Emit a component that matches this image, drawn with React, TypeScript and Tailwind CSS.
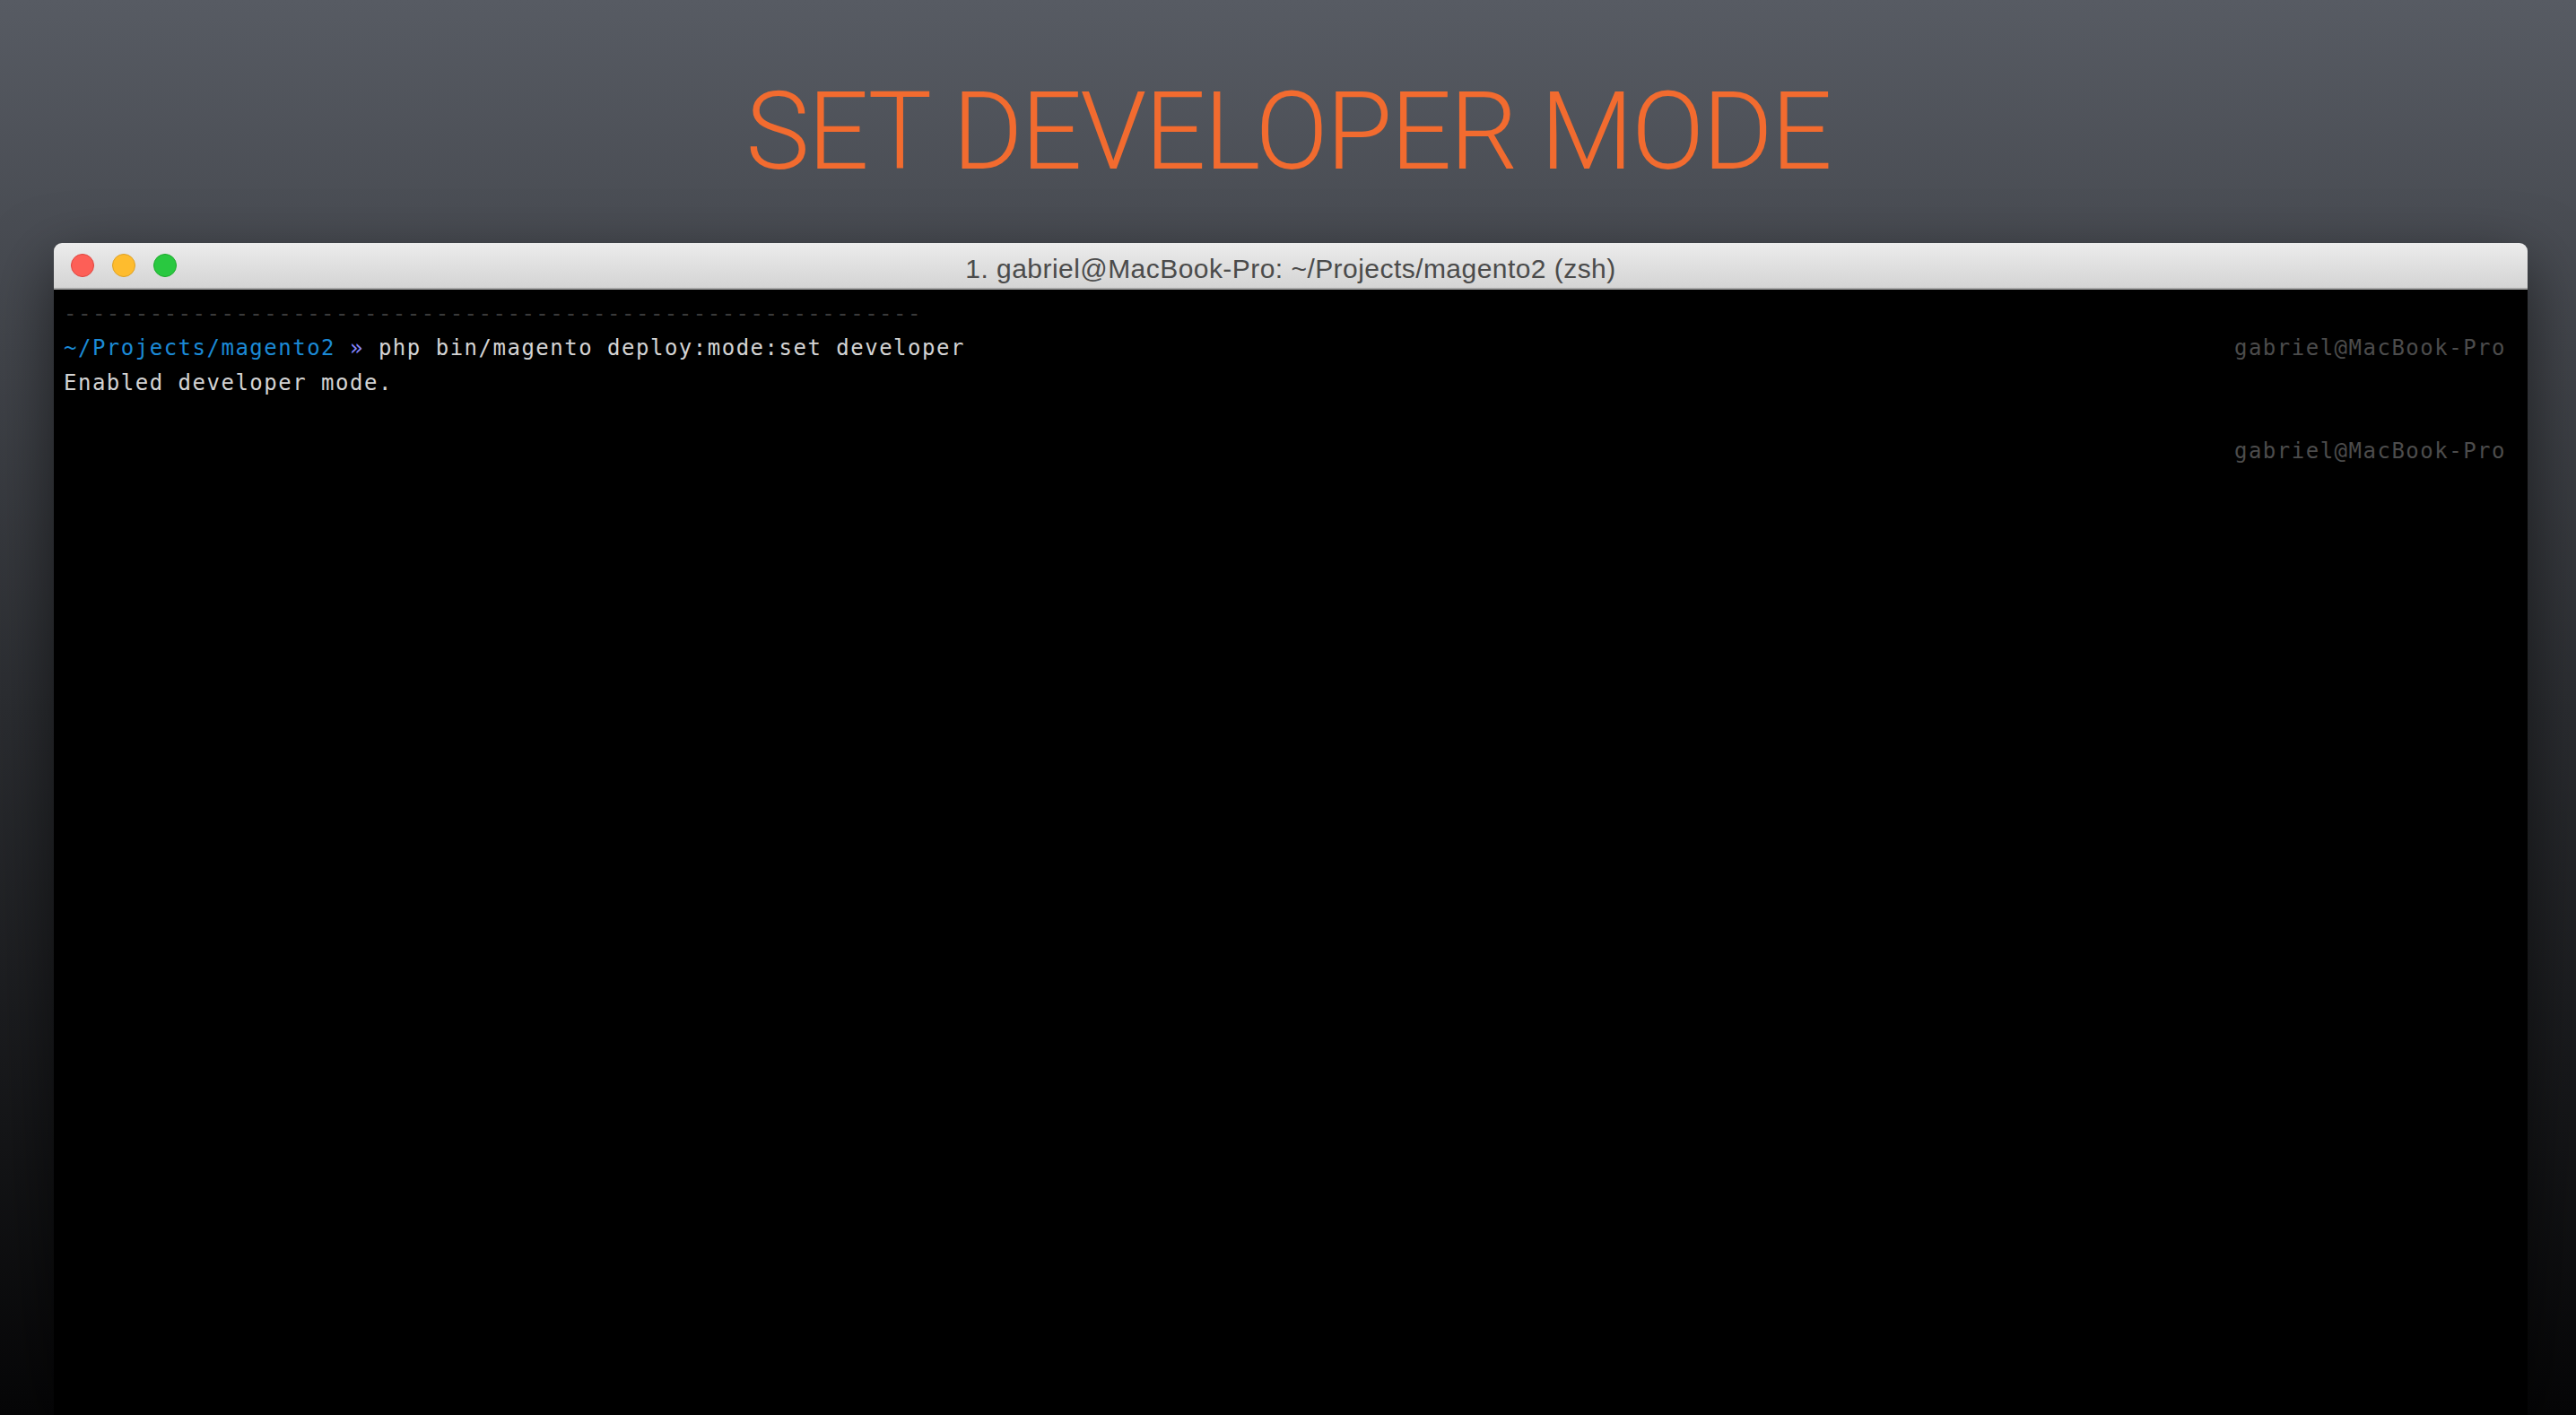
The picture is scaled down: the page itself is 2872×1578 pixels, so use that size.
const mono = { fontFamily: '"DejaVu Sans Mono", "Liberation Mono", monospace' };

function TrafficLights() {
  return (
    <div className="flex items-center gap-[20px] pl-[19px]">
      <span className="h-[26px] w-[26px] rounded-full border border-[#e0443e] bg-[#fd5f57]" />
      <span className="h-[26px] w-[26px] rounded-full border border-[#dea123] bg-[#febc2e]" />
      <span className="h-[26px] w-[26px] rounded-full border border-[#1aab29] bg-[#29c840]" />
    </div>
  );
}

function RightPrompt() {
  return <span className="text-[#4c4c4c]">gabriel@MacBook-Pro</span>;
}

export default function App() {
  return (
    <div className="flex h-screen w-full flex-col overflow-hidden bg-[linear-gradient(to_bottom,#575b63,#2b2d31_50%,#060607)]">
      <h1
        className="mt-[87px] text-center text-[120px] font-light leading-none tracking-[-2.2px] text-[#f26b2f]"
        style={{ fontFamily: 'Roboto, "Liberation Sans", sans-serif' }}
      >
        SET DEVELOPER MODE
      </h1>

      <div className="ml-[60px] mt-[64px] flex w-[2758px] flex-1 flex-col overflow-hidden rounded-t-[9px] shadow-[0_24px_70px_rgba(0,0,0,0.55)]">
        <div className="grid h-[52px] shrink-0 grid-cols-[1fr_auto_1fr] items-center border-b-2 border-[#a4a4a4] bg-[linear-gradient(to_bottom,#ececec,#d4d4d4)]">
          <TrafficLights />
          <span
            className="pt-[7px] text-[30px] leading-none tracking-[0.45px] text-[#4b4b4b]"
            style={{ fontFamily: '"Liberation Sans", Arial, sans-serif' }}
          >
            1. gabriel@MacBook-Pro: ~/Projects/magento2 (zsh)
          </span>
          <span />
        </div>

        <div className="flex-1 bg-black pl-[11px] pr-[24px] pt-[8px] text-[24px] leading-[38.33px] tracking-[1.5px] text-[#d4d4d4] whitespace-pre" style={mono}>
          <div className="text-[#3a3a3a]">{'-'.repeat(60)}</div>
          <div className="flex justify-between">
            <span>
              <span className="text-[#1b8ad6]">~/Projects/magento2</span>
              <span className="text-[#8787ff]"> » </span>
              php bin/magento deploy:mode:set developer
            </span>
            <RightPrompt />
          </div>
          <div>Enabled developer mode.</div>
          <div>{' '}</div>
          <div className="flex justify-end">
            <RightPrompt />
          </div>
        </div>
      </div>
    </div>
  );
}
